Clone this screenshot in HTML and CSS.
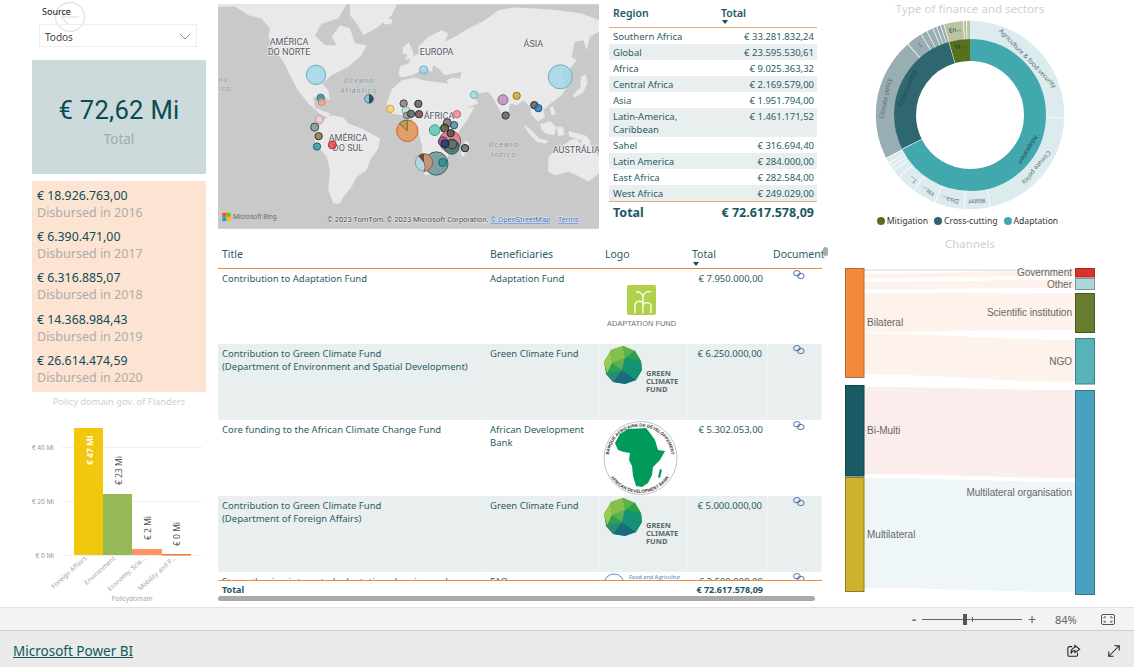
FILE: index.html
```html
<!DOCTYPE html>
<html lang="en">
<head>
<meta charset="utf-8">
<title>Microsoft Power BI</title>
<link rel="stylesheet" href="styles.css">
</head>
<body>
<main class="report">
  <section class="left">
    <div class="slicer">
      <svg class="back" viewBox="0 0 32 32" aria-hidden="true"><circle cx="16" cy="16" r="14.5"/><path d="M25 16H7M15 8l-8 8 8 8"/></svg>
      <div class="slicer-label">Source</div>
      <div class="dropdown"><span>Todos</span>
        <svg class="chev" viewBox="0 0 12 7" aria-hidden="true"><path d="M1 1l5 5 5-5"/></svg>
      </div>
    </div>
    <div class="kpi"><div class="kpi-value">€ 72,62 Mi</div><div class="kpi-label">Total</div></div>
    <div class="years">
      <div class="year"><div class="y-val">€ 18.926.763,00</div><div class="y-lab">Disbursed in 2016</div></div>
      <div class="year"><div class="y-val">€ 6.390.471,00</div><div class="y-lab">Disbursed in 2017</div></div>
      <div class="year"><div class="y-val">€ 6.316.885,07</div><div class="y-lab">Disbursed in 2018</div></div>
      <div class="year"><div class="y-val">€ 14.368.984,43</div><div class="y-lab">Disbursed in 2019</div></div>
      <div class="year"><div class="y-val">€ 26.614.474,59</div><div class="y-lab">Disbursed in 2020</div></div>
    </div>
    <div class="chart-title">Policy domain gov. of Flanders</div>
    <svg class="bars" viewBox="0 410 218 197" aria-label="Bar chart">
      <g class="grid"><path d="M62 447.500H202M62 501.500H202M62 555.500H202"/></g>
      <text class="axis" x="54" y="450" text-anchor="end">€ 40 Mi</text>
      <text class="axis" x="54" y="504" text-anchor="end">€ 20 Mi</text>
      <text class="axis" x="54" y="558" text-anchor="end">€ 0 Mi</text>
      <rect x="74" y="428" width="29" height="127" fill="#f2c80f"/>
      <rect x="103" y="494" width="29" height="61" fill="#95b957"/>
      <rect x="132" y="549" width="30" height="6" fill="#fd9462"/>
      <rect x="162" y="554" width="29" height="1.500" fill="#f07a28"/>
      <text class="val white" transform="translate(93 465) rotate(-90)">€ 47 Mi</text>
      <text class="val" transform="translate(122 485) rotate(-90)">€ 23 Mi</text>
      <text class="val" transform="translate(151 540) rotate(-90)">€ 2 Mi</text>
      <text class="val" transform="translate(180 546) rotate(-90)">€ 0 Mi</text>
      <text class="cat" transform="translate(87 559) rotate(-42)" text-anchor="end">Foreign Affairs</text>
      <text class="cat" transform="translate(116 559) rotate(-42)" text-anchor="end">Environment</text>
      <text class="cat" transform="translate(146 559) rotate(-42)" text-anchor="end">Economy, Scie...</text>
      <text class="cat" transform="translate(176 559) rotate(-42)" text-anchor="end">Mobility and P...</text>
      <text class="cat" x="132" y="601" text-anchor="middle">Policydomain</text>
    </svg>
  </section>

  <section class="mid">
    <div class="mid-top">
      <svg class="map" viewBox="9 12 1143 674" aria-label="Map">
        <rect class="water" x="9" y="12" width="1143" height="674"/>
        <g class="land">
          <path d="M9 20L60 18 100 45 140 55 165 85 160 110 175 145 205 185 225 225 245 265 280 310 320 345 340 352 345 340 318 330 300 322 295 292 320 285 345 300 340 270 320 250 350 225 400 200 440 165 455 135 420 130 405 85 375 75 350 110 365 135 330 135 300 105 320 70 370 55 395 12H9z"/>
          <path d="M405 12H545L530 45 490 80 445 105 425 70 405 45z"/>
          <ellipse cx="518" cy="64" rx="14" ry="9"/>
          <path d="M330 355L350 345 385 352 400 370 440 385 495 415 490 445 465 480 455 510 425 530 410 560 385 590 375 610 355 610 340 570 345 510 335 470 300 430 300 400 315 375z"/>
          <path d="M556 198L580 190 590 170 612 160 610 140 640 110 680 90 700 100 690 125 720 110 760 85 810 60 850 30 900 22 960 25 1030 30 1100 40 1152 60V95L1125 110 1115 150 1105 120 1080 125 1070 170 1085 180 1060 210 1040 205 1045 235 1058 255 1040 285 1000 315 985 330 990 350 970 365 950 345 945 320 925 300 905 315 885 310 875 360 862 345 835 295 820 275 790 280 770 270 790 310 735 330 715 285 695 240 712 232 735 235 740 215 690 225 670 205 655 195 650 215 630 205 590 225 560 232 550 222z"/>
          <path d="M530 268L560 240 600 232 625 240 660 245 700 250 725 305 745 325 778 320 760 355 730 395 735 430 700 465 690 500 660 520 630 525 618 480 622 440 608 390 590 355 560 345 530 340 515 310z"/>
          <path d="M752 420L762 428 756 456 744 470 736 460z"/>
          <path d="M1000 470L1040 440 1065 420 1085 415 1095 430 1115 405 1130 440 1152 470V520L1120 545 1085 525 1060 515 1020 525 1000 515z"/>
          <path d="M925 372L951 392 973 416 999 422 995 430 967 426 941 400zM975 372L1005 364 1023 378 1019 404 997 402 981 392zM1024 380H1044L1048 404 1030 408zM1060 392L1110 406 1130 426 1102 422 1062 408z"/>
          <path d="M1004 322L1014 318 1022 342 1010 346z"/>
          <path d="M1098 230L1112 222 1118 248 1104 278 1078 292 1074 282 1096 262z"/>
          <path d="M565 140L582 126 588 142 596 160 590 176 570 178 578 164 562 160z"/>
          <path d="M878 342L886 346 884 358 876 354z"/>
        </g>
        <g class="map-labels">
          <text x="222" y="136">AMÉRICA</text><text x="222" y="164">DO NORTE</text>
          <text x="665" y="166">EUROPA</text>
          <text x="955" y="140">ÁSIA</text>
          <text x="672" y="358">ÁFRICA</text>
          <text x="399" y="424">AMÉRICA</text><text x="399" y="452">DO SUL</text>
          <text x="1084" y="460">AUSTRÁLIA</text>
        </g>
        <g class="ocean-labels">
          <text x="431" y="250">Oceano</text><text x="431" y="278">Atlântico</text>
          <text x="866" y="442">Oceano</text><text x="866" y="470">Índico</text>
          <text class="edge" x="11" y="245">no</text><text class="edge" x="11" y="273">ico</text>
        </g>
        <g class="bubbles">
          <circle cx="303" cy="224" r="29" fill="#a3d8e8" stroke="#6badc0"/>
          <circle cx="1036" cy="230" r="36" fill="#a3d8e8" stroke="#6badc0"/>
          <circle cx="626" cy="209" r="12" fill="#a3d8e8" stroke="#6badc0"/>
          <circle cx="317" cy="293" r="11" fill="#2f96a3" stroke="#1f7a86"/>
          <circle cx="320" cy="306" r="10" fill="#f0a98a" stroke="#c98468"/>
          <circle cx="462" cy="296" r="13" fill="#7fc2d4" stroke="#46808c"/>
          <path d="M462 283a13 13 0 0 1 0 26z" fill="#1d3d48"/>
          <circle cx="526" cy="326" r="11" fill="#f4d66c" stroke="#c7a93f"/>
          <circle cx="566" cy="310" r="11" fill="#8b7f7f" stroke="#444"/>
          <circle cx="610" cy="311" r="11" fill="#5f6464" stroke="#2c2c2c"/>
          <circle cx="573" cy="332" r="12" fill="#b9e0df" stroke="#86b5b5"/>
          <circle cx="575" cy="346" r="10" fill="#8f9c9c" stroke="#5d6b6b"/>
          <circle cx="588" cy="341" r="11" fill="#5c6666" stroke="#333"/>
          <circle cx="612" cy="342" r="11" fill="#82484f" stroke="#3f2a2c"/>
          <circle cx="726" cy="342" r="11" fill="#f58a92" stroke="#cb6670"/>
          <circle cx="777" cy="284" r="11" fill="#a9dbe8" stroke="#70b0c2"/>
          <circle cx="864" cy="299" r="15" fill="#c191bb" stroke="#8c6488"/>
          <circle cx="905" cy="287" r="11" fill="#c9a933" stroke="#8f7a25"/>
          <circle cx="958" cy="315" r="11" fill="#5e666b" stroke="#22282c"/>
          <circle cx="970" cy="324" r="11" fill="#2c79bd" stroke="#1c5488"/>
          <circle cx="872" cy="346" r="11" fill="#6f5869" stroke="#333"/>
          <circle cx="313" cy="358" r="12" fill="#f2cfd0" stroke="#b89d9f"/>
          <circle cx="299" cy="381" r="12" fill="#869a9e" stroke="#3f4d50"/>
          <circle cx="311" cy="408" r="11" fill="#8a7c45" stroke="#3a3519"/>
          <circle cx="306" cy="439" r="11" fill="#3b97ac" stroke="#1f6677"/>
          <circle cx="352" cy="434" r="12" fill="#e2494a" stroke="#a92e30"/>
          <circle cx="577" cy="392" r="32" fill="#e79657" stroke="#bd6d32"/>
          <path d="M577 392L553 370a32 32 0 0 1 24-10z" fill="#b3a14f" stroke="#7a6b2d"/>
          <circle cx="659" cy="390" r="16" fill="#5fc7b9" stroke="#3c9a8e"/>
          <circle cx="717" cy="375" r="11" fill="#4a8eab" stroke="#2b4f5e"/>
          <circle cx="697" cy="368" r="12" fill="#7f7174" stroke="#4a4244"/>
          <circle cx="689" cy="384" r="12" fill="#4c5a37" stroke="#1c2412"/>
          <circle cx="705" cy="423" r="32" fill="#d3747f" stroke="#a34f5c"/>
          <circle cx="710" cy="440" r="22" fill="#3f7a70" stroke="#264f49"/>
          <circle cx="707" cy="399" r="11" fill="#5d4e50" stroke="#2a2122"/>
          <circle cx="684" cy="424" r="14" fill="#8c5a8b" stroke="#5c3a5c"/>
          <circle cx="712" cy="432" r="14" fill="#5f7070" stroke="#26302f"/>
          <circle cx="690" cy="431" r="12" fill="#26406a" stroke="#14233d"/>
          <circle cx="750" cy="444" r="11" fill="#5e6a6a" stroke="#222"/>
          <circle cx="664" cy="490" r="35" fill="#6f9299" stroke="#3f6168"/>
          <circle cx="627" cy="487" r="26" fill="#a9d9e8" stroke="#7c9fab"/>
          <path d="M627 487L611 467a26 26 0 0 1 16-6 26 26 0 0 1 0 52 26 26 0 0 0 0-26z" fill="#c98b6e" stroke="#9a5e45"/>
          <path d="M627 487l-16-20a26 26 0 0 1 16-6z" fill="#6a3428"/>
          <circle cx="683" cy="487" r="12" fill="#27908f" stroke="#1d6868"/>
        </g>
        <g class="bing-logo">
          <rect x="22" y="638" width="12" height="12" fill="#f25022"/>
          <rect x="35" y="638" width="12" height="12" fill="#7fba00"/>
          <rect x="22" y="651" width="12" height="12" fill="#00a4ef"/>
          <rect x="35" y="651" width="12" height="12" fill="#ffb900"/>
        </g>
        <text class="bing" x="54" y="658">Microsoft Bing</text>
        <text class="attr" x="336" y="665">© 2023 TomTom, © 2023 Microsoft Corporation,</text>
        <text class="attr link" x="826" y="665">© OpenStreetMap</text>
        <text class="attr link" x="1028" y="665">Terms</text>
      </svg>
      <div class="regions">
        <div class="reg-head"><span>Region</span><span class="reg-total">Total<i class="caret"></i></span></div>
        <div class="reg-row"><span>Southern Africa</span><span>€ 33.281.832,24</span></div>
        <div class="reg-row alt"><span>Global</span><span>€ 23.595.530,61</span></div>
        <div class="reg-row"><span>Africa</span><span>€ 9.025.363,32</span></div>
        <div class="reg-row alt"><span>Central Africa</span><span>€ 2.169.579,00</span></div>
        <div class="reg-row"><span>Asia</span><span>€ 1.951.794,00</span></div>
        <div class="reg-row alt"><span>Latin-America,<br>Caribbean</span><span>€ 1.461.171,52</span></div>
        <div class="reg-row"><span>Sahel</span><span>€ 316.694,40</span></div>
        <div class="reg-row alt"><span>Latin America</span><span>€ 284.000,00</span></div>
        <div class="reg-row"><span>East Africa</span><span>€ 282.584,00</span></div>
        <div class="reg-row alt"><span>West Africa</span><span>€ 249.029,00</span></div>
        <div class="reg-foot"><span>Total</span><span>€ 72.617.578,09</span></div>
      </div>
    </div>

    <div class="projects">
      <i class="pill"></i>
      <div class="p-row p-head">
        <span>Title</span><span>Beneficiaries</span><span class="p-logo">Logo</span><span class="p-total">Total<i class="caret"></i></span><span class="p-doc">Document</span>
      </div>
      <div class="p-body">
        <div class="p-row">
          <span>Contribution to Adaptation Fund</span><span>Adaptation Fund</span>
          <span class="logo">
            <svg class="logo-svg" viewBox="0 0 80 60" aria-label="Adaptation Fund">
              <rect x="27" y="16" width="29" height="30" rx="2" fill="#b1d14a"/>
              <path class="fountain" d="M35 44v-8a4.500 4.500 0 0 1 8-2M43 44V28a6 6 0 0 1 8-5M43 28a6 6 0 0 0-7-5M43 36a4.500 4.500 0 0 1 8 0v8"/>
              <text class="af" x="7" y="57" textLength="69" lengthAdjust="spacingAndGlyphs">ADAPTATION FUND</text>
            </svg>
          </span>
          <span class="num">€ 7.950.000,00</span>
          <span class="doc"><svg class="chain" viewBox="0 0 12 10" aria-hidden="true"><rect x=".7" y=".7" width="6.500" height="5" rx="2.400"/><rect x="4.500" y="3.500" width="6.500" height="5" rx="2.400"/></svg></span>
        </div>
        <div class="p-row alt">
          <span>Contribution to Green Climate Fund<br>(Department of Environment and Spatial Development)</span><span>Green Climate Fund</span>
          <span class="logo">
            <svg class="logo-svg" viewBox="0 0 80 60" aria-label="Green Climate Fund">
              <path d="M11 6L23 2 35 7 41 17 42 26 36 36 25 40 13 38 6 30 4 18z" fill="#2ba24c"/>
              <path d="M11 6L23 2 25 14 12 19z" fill="#86c04a"/><path d="M4 18L11 6 12 19 7 29z" fill="#9cc954"/>
              <path d="M23 2L35 7 25 14z" fill="#5fb048"/><path d="M25 14L35 7 41 17z" fill="#2aa04a"/>
              <path d="M12 19L25 14 22 26z" fill="#5cb050"/><path d="M6 30L22 26 13 38z" fill="#2a8a7a"/>
              <path d="M22 26L36 36 25 40 13 38z" fill="#1a6a80"/><path d="M25 14L41 17 42 26 36 36 22 26z" fill="#159173"/>
              <text class="gcf" x="46" y="32">GREEN</text><text class="gcf" x="46" y="40">CLIMATE</text><text class="gcf" x="46" y="48">FUND</text>
            </svg>
          </span>
          <span class="num">€ 6.250.000,00</span>
          <span class="doc"><svg class="chain" viewBox="0 0 12 10" aria-hidden="true"><rect x=".7" y=".7" width="6.500" height="5" rx="2.400"/><rect x="4.500" y="3.500" width="6.500" height="5" rx="2.400"/></svg></span>
        </div>
        <div class="p-row">
          <span>Core funding to the African Climate Change Fund</span><span>African Development Bank</span>
          <span class="logo">
            <svg class="logo-svg tall" viewBox="0 0 80 76" aria-label="African Development Bank">
              <defs>
                <path id="arcTop" d="M9.500 46A31.500 31.500 0 1 1 70.500 46"/>
                <path id="arcBot" d="M8 52A35 35 0 0 0 72 52"/>
              </defs>
              <circle cx="40.500" cy="38" r="36.500" fill="#fff" stroke="#999" stroke-width=".6"/>
              <text class="adb"><textPath href="#arcTop" startOffset="50%" text-anchor="middle">BANQUE AFRICAINE DE DÉVELOPPEMENT</textPath></text>
              <text class="adb"><textPath href="#arcBot" startOffset="50%" text-anchor="middle">AFRICAN DEVELOPMENT BANK</textPath></text>
              <path d="M28 9L46 8 50 13 55 20 58 30 65 31 60 40 53 47 52 55 48 63 42 67 36 66 33 56 32 46 29 40 30 33 24 32 18 30 15 23 20 14z" fill="#009a5b"/>
              <path d="M60 49l2 1-2 8-2-1z" fill="#009a5b"/>
            </svg>
          </span>
          <span class="num">€ 5.302.053,00</span>
          <span class="doc"><svg class="chain" viewBox="0 0 12 10" aria-hidden="true"><rect x=".7" y=".7" width="6.500" height="5" rx="2.400"/><rect x="4.500" y="3.500" width="6.500" height="5" rx="2.400"/></svg></span>
        </div>
        <div class="p-row alt">
          <span>Contribution to Green Climate Fund<br>(Department of Foreign Affairs)</span><span>Green Climate Fund</span>
          <span class="logo">
            <svg class="logo-svg" viewBox="0 0 80 60" aria-label="Green Climate Fund">
              <path d="M11 6L23 2 35 7 41 17 42 26 36 36 25 40 13 38 6 30 4 18z" fill="#2ba24c"/>
              <path d="M11 6L23 2 25 14 12 19z" fill="#86c04a"/><path d="M4 18L11 6 12 19 7 29z" fill="#9cc954"/>
              <path d="M23 2L35 7 25 14z" fill="#5fb048"/><path d="M25 14L35 7 41 17z" fill="#2aa04a"/>
              <path d="M12 19L25 14 22 26z" fill="#5cb050"/><path d="M6 30L22 26 13 38z" fill="#2a8a7a"/>
              <path d="M22 26L36 36 25 40 13 38z" fill="#1a6a80"/><path d="M25 14L41 17 42 26 36 36 22 26z" fill="#159173"/>
              <text class="gcf" x="46" y="32">GREEN</text><text class="gcf" x="46" y="40">CLIMATE</text><text class="gcf" x="46" y="48">FUND</text>
            </svg>
          </span>
          <span class="num">€ 5.000.000,00</span>
          <span class="doc"><svg class="chain" viewBox="0 0 12 10" aria-hidden="true"><rect x=".7" y=".7" width="6.500" height="5" rx="2.400"/><rect x="4.500" y="3.500" width="6.500" height="5" rx="2.400"/></svg></span>
        </div>
        <div class="p-row">
          <span>Strengthening integrated adaptation planning and</span><span>FAO</span>
          <span class="logo">
            <svg class="logo-svg" viewBox="0 0 80 60" aria-label="FAO">
              <circle cx="14" cy="12" r="10" fill="none" stroke="#5b92c9"/>
              <text class="fao" x="29" y="7">Food and Agriculture</text>
            </svg>
          </span>
          <span class="num">€ 2.500.000,00</span>
          <span class="doc"><svg class="chain" viewBox="0 0 12 10" aria-hidden="true"><rect x=".7" y=".7" width="6.500" height="5" rx="2.400"/><rect x="4.500" y="3.500" width="6.500" height="5" rx="2.400"/></svg></span>
        </div>
      </div>
      <div class="p-row p-foot"><span>Total</span><span></span><span></span><span class="num">€ 72.617.578,09</span><span></span></div>
      <div class="hscroll"></div>
    </div>
  </section>

  <section class="right">
    <div class="donut-title">Type of finance and sectors</div>
    <svg class="donut" viewBox="0 0 200 200" aria-label="Donut chart">
      <g class="ring-outer">
        <circle r="85" pathLength="360" stroke="#dcecee" stroke-dasharray="91.500 360"/>
        <circle r="85" pathLength="360" stroke="#dcecee" stroke-dasharray="75 360" stroke-dashoffset="-92"/>
        <circle r="85" pathLength="360" stroke="#dcecee" stroke-dasharray="16 360" stroke-dashoffset="-167.500"/>
        <circle r="85" pathLength="360" stroke="#dcecee" stroke-dasharray="17.500 360" stroke-dashoffset="-184"/>
        <circle r="85" pathLength="360" stroke="#dcecee" stroke-dasharray="14.500 360" stroke-dashoffset="-202"/>
        <circle r="85" pathLength="360" stroke="#dcecee" stroke-dasharray="11.500 360" stroke-dashoffset="-217"/>
        <circle r="85" pathLength="360" stroke="#dcecee" stroke-dasharray="4.500 360" stroke-dashoffset="-229"/>
        <circle r="85" pathLength="360" stroke="#dcecee" stroke-dasharray="2.500 360" stroke-dashoffset="-234"/>
        <circle r="85" pathLength="360" stroke="#dcecee" stroke-dasharray="2 360" stroke-dashoffset="-237"/>
        <circle r="85" pathLength="360" stroke="#dcecee" stroke-dasharray="3 360" stroke-dashoffset="-239.500"/>
        <circle r="85" pathLength="360" stroke="#98aeb2" stroke-dasharray="75.500 360" stroke-dashoffset="-243"/>
        <circle r="85" pathLength="360" stroke="#98aeb2" stroke-dasharray="9.500 360" stroke-dashoffset="-319"/>
        <circle r="85" pathLength="360" stroke="#98aeb2" stroke-dasharray="3.500 360" stroke-dashoffset="-329"/>
        <circle r="85" pathLength="360" stroke="#98aeb2" stroke-dasharray="3.500 360" stroke-dashoffset="-333"/>
        <circle r="85" pathLength="360" stroke="#98aeb2" stroke-dasharray="2 360" stroke-dashoffset="-337"/>
        <circle r="85" pathLength="360" stroke="#98aeb2" stroke-dasharray="2 360" stroke-dashoffset="-339.500"/>
        <circle r="85" pathLength="360" stroke="#98aeb2" stroke-dasharray="1.500 360" stroke-dashoffset="-342"/>
        <circle r="85" pathLength="360" stroke="#b9c4a2" stroke-dasharray="11.500 360" stroke-dashoffset="-344"/>
        <circle r="85" pathLength="360" stroke="#b9c4a2" stroke-dasharray="1.500 360" stroke-dashoffset="-356"/>
        <circle r="85" pathLength="360" stroke="#b9c4a2" stroke-dasharray="2 360" stroke-dashoffset="-358"/>
      </g>
      <g class="ring-inner">
        <circle r="65" pathLength="360" stroke="#41a9ae" stroke-dasharray="243 360"/>
        <circle r="65" pathLength="360" stroke="#2f6770" stroke-dasharray="100 360" stroke-dashoffset="-243.500"/>
        <circle r="65" pathLength="360" stroke="#56701c" stroke-dasharray="16 360" stroke-dashoffset="-344"/>
      </g>
      <g class="donut-labels">
        <text transform="translate(158 43) rotate(46)">Agriculture &amp; food security</text>
        <text transform="translate(166.700 153) rotate(128.700)">Climate policy</text>
        <text transform="translate(15 83.300) rotate(-79)">Climate policy</text>
        <text class="dark" transform="translate(36.700 73.300) rotate(-67)">Cross-cutting</text>
        <text class="dark" transform="translate(158.300 135) rotate(121)">Adaptation</text>
        <text transform="translate(106.700 186.700) rotate(175.600)">Water</text>
        <text transform="translate(80 185) rotate(193)">Disa...</text>
        <text transform="translate(57.700 176.700) rotate(209)">He...</text>
        <text transform="translate(42.300 165) rotate(222)">I...</text>
        <text transform="translate(50 30) rotate(-40)">I</text>
        <text class="dark" transform="translate(85 14.300) rotate(-9)">En...</text>
        <text class="dark" transform="translate(90 31) rotate(-8)">M...</text>
      </g>
    </svg>
    <div class="legend">
      <span class="lg"><i class="dot d1"></i>Mitigation</span>
      <span class="lg"><i class="dot d2"></i>Cross-cutting</span>
      <span class="lg"><i class="dot d3"></i>Adaptation</span>
    </div>
    <div class="channels">Channels</div>
    <svg class="sankey" viewBox="830 262 280 340" aria-label="Sankey chart">
      <g class="flows">
        <path fill="#e3e3e3" d="M864 269.500H1075V271H864z"/>
        <path fill="#fdf3ec" d="M864 274C930 274 1000 270 1075 270V276C1000 276 930 278 864 278z"/>
        <path fill="#fdf3ec" d="M864 282C950 282 1000 280 1075 280V288C1000 288 950 289 864 289z"/>
        <path fill="#fdf3ec" d="M864 293H1075V330C1000 330 950 332 864 332z"/>
        <path fill="#fdf3ec" d="M864 333C950 334 1000 340 1075 340V382C1000 382 950 375 864 374z"/>
        <path fill="#fbedeb" d="M864 387C950 387 1000 390 1075 390V478C1000 478 950 474 864 474z"/>
        <path fill="#eff6f8" d="M864 478C950 478 1000 482 1075 482V592C1000 592 950 588 864 588z"/>
      </g>
      <g class="nodes">
        <rect x="845.500" y="268.500" width="18.500" height="109" fill="#f5883b" stroke="#b36a34"/>
        <rect x="845.500" y="385.500" width="18.500" height="90.500" fill="#195b64" stroke="#124249"/>
        <rect x="845.500" y="477.500" width="18.500" height="114" fill="#cfb22c" stroke="#8f7c22"/>
        <rect x="1075.500" y="268.500" width="19" height="8.500" fill="#d8322b" stroke="#a32722"/>
        <rect x="1075.500" y="278.500" width="19" height="11" fill="#acd6d8" stroke="#7a9a9c"/>
        <rect x="1075.500" y="293.500" width="19" height="39" fill="#677c2f" stroke="#4b5a22"/>
        <rect x="1075.500" y="338.500" width="19" height="45.500" fill="#57b3b7" stroke="#408285"/>
        <rect x="1075.500" y="390.500" width="19" height="204" fill="#48a1c0" stroke="#35768c"/>
      </g>
      <g class="s-left">
        <text x="867" y="326">Bilateral</text>
        <text x="867" y="434">Bi-Multi</text>
        <text x="867" y="537.500">Multilateral</text>
      </g>
      <g class="s-right">
        <text x="1072" y="276">Government</text>
        <text x="1072" y="288">Other</text>
        <text x="1072" y="316">Scientific institution</text>
        <text x="1072" y="365">NGO</text>
        <text x="1072" y="496">Multilateral organisation</text>
      </g>
    </svg>
  </section>
</main>

<div class="zoombar">
  <span class="z-minus">-</span>
  <div class="z-track"><i class="z-thumb"></i><i class="z-tick"></i></div>
  <span class="z-plus">+</span>
  <span class="z-pct">84%</span>
  <svg class="z-fit" viewBox="0 0 14 11" aria-hidden="true"><rect x=".5" y=".5" width="13" height="10" rx="1.500"/><path d="M3 4.500V3h2M9 3h2v1.500M11 6.500V8H9M5 8H3V6.500"/></svg>
</div>
<footer class="footer">
  <a class="pbi" href="#">Microsoft Power BI</a>
  <div class="f-icons">
    <svg class="f-icon" viewBox="0 0 16 16" aria-hidden="true"><path d="M6 3H2.500A1.500 1.500 0 0 0 1 4.500v8A1.500 1.500 0 0 0 2.500 14h8a1.500 1.500 0 0 0 1.500-1.500V10"/><path d="M9 1.500L14.500 6 9 10V7.500C7 7.500 5.500 8.500 4.500 11c0-4 1.500-6.500 4.500-7z"/></svg>
    <svg class="f-icon" viewBox="0 0 16 16" aria-hidden="true"><path d="M2 14L14 2M8.500 2H14V7.500M2 8.500V14H7.500"/></svg>
  </div>
</footer>
</body>
</html>
```

FILE: styles.css
```css
* { box-sizing: border-box; }
html, body { margin: 0; padding: 0; }
body { width: 1134px; height: 667px; overflow: hidden; background: #fff; font-family: "Noto Sans", "Open Sans", sans-serif; color: #0b4d57; }

.report { display: grid; grid-template-columns: 218px 612px 304px; height: 607px; overflow: hidden; }

/* left column */
.left { display: flex; flex-direction: column; align-items: flex-start; }
.slicer { position: relative; margin-left: 39px; width: 158px; height: 60px; padding-top: 6px; }
.back { position: absolute; left: 15px; top: 1px; width: 32px; height: 32px; fill: none; stroke: #e6e6e6; stroke-width: 1.500; }
.slicer-label { position: relative; font-size: 9px; line-height: 12px; color: #111; margin-left: 3px; }
.dropdown { position: relative; margin-top: 6px; height: 23px; border: 1px solid #eee; display: flex; align-items: center; justify-content: space-between; padding: 2px 5px 0 5px; font-size: 10px; color: #444; }
.chev { width: 12px; height: 7px; fill: none; stroke: #888; stroke-width: 1; }
.kpi { margin-left: 32px; width: 174px; height: 114px; background: #cddadb; display: flex; flex-direction: column; align-items: center; padding-top: 33px; }
.kpi-value { font-family: "Roboto", sans-serif; font-size: 25.600px; line-height: 34px; letter-spacing: .3px; color: #0a4a55; }
.kpi-label { font-size: 13.500px; line-height: 19px; margin-top: 3px; color: #a5aaab; }
.years { margin: 7px 0 0 32px; width: 174px; height: 211px; background: #fce3d2; padding: 6px 0 0 5px; }
.year { height: 41.200px; }
.y-val { font-size: 12.300px; line-height: 18px; color: #0b4d57; }
.y-lab { font-size: 12.500px; line-height: 16px; color: #acacac; }
.chart-title { margin: 4px 0 0 32px; width: 174px; text-align: center; font-size: 9.300px; line-height: 11px; color: #d0d0d0; white-space: nowrap; }
.bars { display: block; width: 218px; height: 197px; margin-top: 3px; }
.grid path { stroke: #eee; fill: none; }
.axis { font-size: 6.500px; fill: #999; }
.val { font-size: 8.500px; fill: #555; }
.val.white { fill: #fff; font-weight: 700; }
.cat { font-size: 6.500px; fill: #a3a3a3; }

/* middle column */
.mid { display: flex; flex-direction: column; padding-top: 4px; }
.mid-top { display: flex; gap: 10px; height: 225px; }
.map { display: block; width: 381px; height: 225px; flex: none; }
.water { fill: #c9c9c9; }
.land { fill: #e9e9e9; }
.map-labels text { font-family: "Roboto", sans-serif; font-size: 27px; fill: #555a66; text-anchor: middle; paint-order: stroke; stroke: #f2f2f2; stroke-width: 4px; }
.ocean-labels text { font-family: "Roboto", sans-serif; font-size: 22px; font-style: italic; letter-spacing: 3px; fill: #7f8f99; text-anchor: middle; paint-order: stroke; stroke: #dcdcdc; stroke-width: 3px; }
.ocean-labels .edge { text-anchor: start; }
.bubbles circle, .bubbles path { stroke-width: 3; fill-opacity: .85; }
.bing { font-family: "Roboto", sans-serif; font-size: 20px; fill: #6c6c6c; }
.attr { font-family: "Roboto", sans-serif; font-size: 22.500px; fill: #444; paint-order: stroke; stroke: #eee; stroke-width: 3px; }
.attr.link { fill: #3d6cc4; text-decoration: underline; }

.regions { width: 208px; flex: none; font-size: 9.500px; line-height: 13px; color: #2b5c65; }
.reg-head { display: flex; height: 24px; border-bottom: 1px solid #e9a97a; font-size: 10.500px; font-weight: 600; color: #1c5761; padding: 3px 0 0 4px; }
.reg-head span:first-child { width: 108px; }
.reg-total { position: relative; }
.caret { position: absolute; width: 0; height: 0; border-left: 3.500px solid transparent; border-right: 3.500px solid transparent; border-top: 4px solid #0b4d57; left: 1px; top: 13px; }
.reg-row { display: flex; justify-content: space-between; padding: 2px 3px 1px 4px; min-height: 16px; }
.reg-row.alt { background: #e9efef; }
.reg-foot { display: flex; justify-content: space-between; border-top: 1px solid #e9a97a; margin-top: 0; padding: 3px 3px 0 4px; font-size: 12.500px; line-height: 16px; font-weight: 700; color: #1c5761; }

.projects { position: relative; margin-top: 12px; width: 608px; }
.pill { position: absolute; left: 605px; top: 6px; width: 5px; height: 9px; border-radius: 3px; background: #aaa; }
.p-row { display: grid; grid-template-columns: 268px 114px 88px 80px 54px; font-size: 9.500px; line-height: 13px; color: #2b5c65; width: 604px; }
.p-row > span { padding: 3px 5px 0 4px; overflow: hidden; }
.p-head { height: 28px; border-bottom: 1px solid #f28b3f; font-size: 10.500px; }
.p-row.p-head > span { padding-top: 7px; overflow: visible; white-space: nowrap; }
.p-row.p-head > .p-logo { padding-left: 5px; }
.p-total { position: relative; }
.p-total .caret { left: 5px; top: 21px; }
.p-row.p-head > .p-doc { padding-left: 5px; }
.p-body { height: 311px; overflow: hidden; }
.p-body .p-row { height: 76px; }
.p-body .p-row:first-child { height: 75px; }
.p-row.alt { background: #e9efef; }
.p-row.alt > span { border-right: 1px solid #f0f4f4; }
.p-row > .logo { padding: 0; }
.logo-svg { display: block; width: 80px; height: 60px; }
.logo-svg.tall { height: 76px; }
.num { text-align: right; }
.p-row > .doc { padding: 1px 0 0 25px; }
.chain { display: block; width: 12px; height: 10px; fill: none; stroke: #4a6ba8; stroke-width: 1; }
.fountain { fill: none; stroke: #fff; stroke-width: 1.300; }
.af { font-family: "Liberation Sans", sans-serif; font-size: 7.500px; fill: #6f6f6f; }
.gcf { font-family: "Noto Sans", sans-serif; font-size: 7.500px; font-weight: 700; fill: #5a6a6a; }
.adb { font-family: "Liberation Sans", sans-serif; font-size: 4.400px; font-weight: 700; fill: #333; }
.fao { font-family: "Noto Sans", sans-serif; font-size: 5.500px; fill: #3f7fc0; }
.p-foot { border-top: 1px solid #f28b3f; height: 16px; font-weight: 700; font-size: 9px; color: #1c5761; }
.p-row.p-foot > span { padding-top: 2px; }
.hscroll { width: 597px; height: 5px; border-radius: 3px; background: #aaa; }

/* right column */
.right { display: flex; flex-direction: column; align-items: flex-start; }
.donut-title, .channels, .legend { width: 280px; text-align: center; }
.donut-title { font-size: 11.600px; line-height: 15px; height: 15px; margin-top: 1px; color: #d6cfcb; }
.donut { display: block; width: 200px; height: 200px; margin: -1px 0 0 40px; }
.ring-outer circle, .ring-inner circle { cx: 100px; cy: 100px; fill: none; transform: rotate(-90deg); transform-origin: 100px 100px; }
.ring-outer circle { stroke-width: 18.500px; }
.ring-inner circle { stroke-width: 22px; }
.donut-labels text { font-size: 6.300px; fill: #5a6a6d; text-anchor: middle; dominant-baseline: central; }
.donut-labels .dark { fill: #22404a; }
.legend { display: flex; justify-content: center; gap: 6px; font-size: 8.600px; line-height: 14px; color: #333; margin-top: -1px; padding-right: 5px; }
.lg { display: flex; align-items: center; gap: 2px; }
.dot { width: 8px; height: 8px; border-radius: 50%; }
.d1 { background: #56701c; }
.d2 { background: #2f6770; }
.d3 { background: #41a9ae; }
.channels { margin-top: 8px; font-size: 11.500px; line-height: 15px; color: #cfcfcf; }
.sankey { display: block; width: 280px; height: 340px; margin-top: 11px; }
.sankey text { font-family: "Liberation Sans", sans-serif; font-size: 10px; fill: #666; }
.s-right text { text-anchor: end; }

/* bottom bars */
.zoombar { height: 24px; background: #f3f3f3; border-top: 1px solid #e2e2e2; border-bottom: 1px solid #cdcdcd; display: flex; align-items: center; padding-left: 912px; color: #666; }
.z-minus { font-size: 13px; width: 10px; font-weight: 700; }
.z-track { position: relative; width: 100px; height: 1px; background: #666; }
.z-thumb { position: absolute; left: 41px; top: -5px; width: 4px; height: 11px; background: #555; }
.z-tick { position: absolute; left: 50px; top: -2px; width: 1px; height: 5px; background: #666; }
.z-plus { font-size: 14px; margin-left: 6px; width: 10px; }
.z-pct { font-size: 11px; margin-left: 17px; width: 24px; }
.z-fit { width: 14px; height: 11px; margin-left: 22px; fill: none; stroke: #555; }
.footer { height: 36px; background: #eaeaea; display: flex; align-items: center; justify-content: space-between; padding: 3px 13px 0; }
.pbi { font-size: 13.500px; color: #0b5a5f; text-decoration: underline; }
.f-icons { display: flex; gap: 26px; }
.f-icon { width: 14px; height: 14px; fill: none; stroke: #222; stroke-width: 1.200; }
```
